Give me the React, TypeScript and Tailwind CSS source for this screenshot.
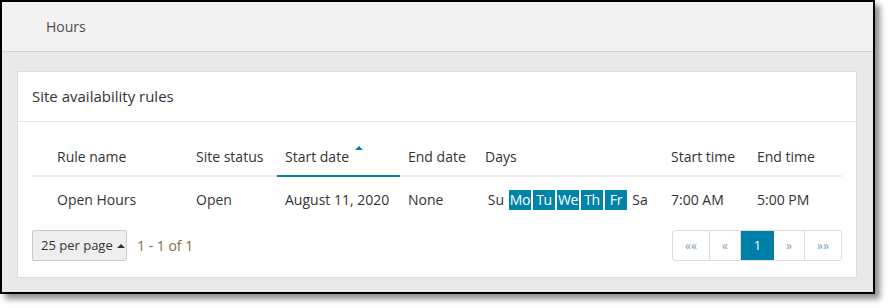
import React from 'react';

const days = [
  { label: 'Su', on: false },
  { label: 'Mo', on: true },
  { label: 'Tu', on: true },
  { label: 'We', on: true },
  { label: 'Th', on: true },
  { label: 'Fr', on: true },
  { label: 'Sa', on: false },
];

function DayPills() {
  return (
    <div className="flex gap-[2px]">
      {days.map((d) => (
        <span
          key={d.label}
          className={
            d.on
              ? 'w-[22px] h-[20px] flex items-center justify-center bg-[#0082aa] text-white tracking-[-0.3px] whitespace-nowrap'
              : 'w-[22px] h-[20px] flex items-center justify-center text-[#333]'
          }
        >
          {d.label}
        </span>
      ))}
    </div>
  );
}

function Pager() {
  const cell = 'h-full flex items-center justify-center border-r border-[#dddddd] text-[12px] text-[#7f9db8]';
  return (
    <div className="flex h-[31px] border border-[#dddddd] rounded-[3px] overflow-hidden">
      <span className={cell + ' w-[37px]'}>««</span>
      <span className={cell + ' w-[31px]'}>«</span>
      <span className="w-[33px] h-full flex items-center justify-center bg-[#0080a8] text-white text-[13px]">1</span>
      <span className={cell + ' w-[31px]'}>»</span>
      <span className="w-[36px] h-full flex items-center justify-center text-[12px] text-[#7f9db8]">»»</span>
    </div>
  );
}

export default function App() {
  const th = 'h-[38px] px-2 text-left font-normal border-b-2 border-[#eeeeee] align-middle whitespace-nowrap';
  const td = 'h-[46px] px-2 align-middle';

  return (
    <div className="w-[889px] h-[308px] bg-white font-['Open_Sans',sans-serif] text-[14px] text-[#333]">
      <div className="w-[875px] h-[294px] border-2 border-black bg-[#e9e9e9] shadow-[5px_5px_6px_rgba(0,0,0,0.45)] flex flex-col">
        <div className="h-[50px] shrink-0 bg-[#f2f2f2] border-b border-[#d5d5d5] flex items-center pl-[44px] text-[#4d4d4d]">
          Hours
        </div>

        <div className="pt-[19px] pl-[15px] pr-[16px]">
          <div className="bg-white border border-[#dcdcdc]">
            <div className="h-[50px] border-b border-[#e6e6e6] flex items-center px-[14px] text-[15px]">
              Site availability rules
            </div>

            <div className="px-[14px] pt-[16px] pb-[16px]">
              <table className="w-full table-fixed border-collapse">
                <colgroup>
                  <col className="w-[17px]" />
                  <col className="w-[139px]" />
                  <col className="w-[89px]" />
                  <col className="w-[123px]" />
                  <col className="w-[77px]" />
                  <col className="w-[186px]" />
                  <col className="w-[86px]" />
                  <col className="w-[93px]" />
                </colgroup>
                <thead>
                  <tr>
                    <th className={th}></th>
                    <th className={th}>Rule name</th>
                    <th className={th}>Site status</th>
                    <th className="h-[38px] px-2 text-left font-normal border-b-2 border-[#0082aa] align-middle whitespace-nowrap">
                      Start date
                      <span className="inline-block ml-[6px] w-0 h-0 border-x-4 border-x-transparent border-b-4 border-b-[#0082aa] align-[12px]" />
                    </th>
                    <th className={th}>End date</th>
                    <th className={th}>Days</th>
                    <th className={th}>Start time</th>
                    <th className={th}>End time</th>
                  </tr>
                </thead>
                <tbody>
                  <tr>
                    <td className={td}></td>
                    <td className={td}>Open Hours</td>
                    <td className={td}>Open</td>
                    <td className={td + ' whitespace-nowrap'}>August 11, 2020</td>
                    <td className={td}>None</td>
                    <td className={td}>
                      <DayPills />
                    </td>
                    <td className={td}>7:00 AM</td>
                    <td className={td}>5:00 PM</td>
                  </tr>
                </tbody>
              </table>

              <div className="mt-[8px] flex items-center justify-between">
                <div className="flex items-center">
                  <button
                    type="button"
                    className="h-[31px] w-[95px] flex items-center pl-[8px] bg-[#eeeeee] border border-[#cccccc] rounded-[2px] text-[13px] text-[#333]"
                  >
                    25 per page
                    <span className="inline-block ml-[4px] w-0 h-0 border-x-4 border-x-transparent border-b-4 border-b-[#333]" />
                  </button>
                  <span className="ml-[10px] text-[#8a6d3b]">1 - 1 of 1</span>
                </div>
                <Pager />
              </div>
            </div>
          </div>
        </div>
      </div>
    </div>
  );
}
